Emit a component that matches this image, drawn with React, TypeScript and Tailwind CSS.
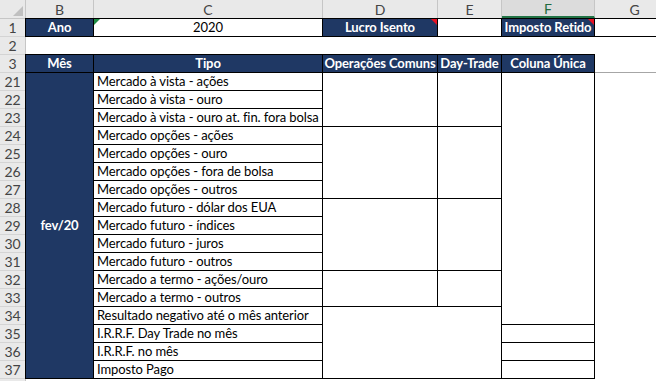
import React from 'react';

const font = "font-['Lato','Liberation_Sans',sans-serif]";

const colHeaders = [
  { label: 'B', w: 'w-[68px]', active: false },
  { label: 'C', w: 'w-[229px]', active: false },
  { label: 'D', w: 'w-[115px]', active: false },
  { label: 'E', w: 'w-[64px]', active: false },
  { label: 'F', w: 'w-[93px]', active: true },
  { label: 'G', w: 'w-[80px]', active: false },
];

// row 38 is only a couple of pixels tall in view, its number isn't visible
const rowNums = ['1', '2', '3', '21', '22', '23', '24', '25', '26', '27', '28', '29', '30', '31', '32', '33', '34', '35', '36', '37', ''];

const tipos = [
  { label: 'Mercado à vista - ações', row: 'row-start-4' },
  { label: 'Mercado à vista - ouro', row: 'row-start-5' },
  { label: 'Mercado à vista - ouro at. fin. fora bolsa', row: 'row-start-6' },
  { label: 'Mercado opções - ações', row: 'row-start-7' },
  { label: 'Mercado opções - ouro', row: 'row-start-8' },
  { label: 'Mercado opções - fora de bolsa', row: 'row-start-9' },
  { label: 'Mercado opções - outros', row: 'row-start-10' },
  { label: 'Mercado futuro - dólar dos EUA', row: 'row-start-11' },
  { label: 'Mercado futuro - índices', row: 'row-start-12' },
  { label: 'Mercado futuro - juros', row: 'row-start-13' },
  { label: 'Mercado futuro - outros', row: 'row-start-14' },
  { label: 'Mercado a termo - ações/ouro', row: 'row-start-15' },
  { label: 'Mercado a termo - outros', row: 'row-start-16' },
  { label: 'Resultado negativo até o mês anterior', row: 'row-start-17' },
  { label: 'I.R.R.F. Day Trade no mês', row: 'row-start-18' },
  { label: 'I.R.R.F. no mês', row: 'row-start-19' },
  { label: 'Imposto Pago', row: 'row-start-20' },
];

// merged, empty blocks in D/E/F
const blocks = [
  'col-start-3 row-start-4 row-span-3',
  'col-start-4 row-start-4 row-span-3',
  'col-start-3 row-start-7 row-span-4',
  'col-start-4 row-start-7 row-span-4',
  'col-start-3 row-start-11 row-span-4',
  'col-start-4 row-start-11 row-span-4',
  'col-start-3 row-start-15 row-span-2',
  'col-start-4 row-start-15 row-span-2',
  'col-start-3 col-span-2 row-start-17 row-span-4',
  'col-start-5 row-start-4 row-span-14',
  'col-start-5 row-start-18',
  'col-start-5 row-start-19',
  'col-start-5 row-start-20',
];

const cell = '-mt-px -ml-px border border-black flex items-center whitespace-nowrap';
const blue = 'bg-[#1f3864] text-white font-bold justify-center';

const RedMark = () => (
  <span className="absolute top-0 right-0 w-0 h-0 border-t-[6px] border-t-[#e81123] border-l-[6px] border-l-transparent" />
);

export default function App() {
  return (
    <div className={`w-[656px] h-[381px] overflow-hidden bg-white text-[13px] tracking-[-0.1px] text-black ${font}`}>
      {/* column headers */}
      <div className="flex h-[19px] bg-[#e9e9e9] border-b border-[#c6c6c6] text-[#444] text-[14px]">
        <div className="relative w-[26px] shrink-0 border-r border-[#c6c6c6]">
          <span className="absolute bottom-[2px] right-[2px] w-0 h-0 border-b-[10px] border-b-[#c0c0c0] border-l-[10px] border-l-transparent" />
        </div>
        {colHeaders.map((c) => (
          <div
            key={c.label}
            className={
              c.active
                ? `${c.w} shrink-0 flex items-center justify-center border-r border-[#c6c6c6] bg-[#dcdcdc] text-[#1f6b40] border-b-2 border-b-[#217346]`
                : `${c.w} shrink-0 flex items-center justify-center border-r border-[#c6c6c6]`
            }
          >
            {c.label}
          </div>
        ))}
      </div>

      <div className="flex">
        {/* row numbers */}
        <div className="w-[26px] shrink-0 flex flex-col bg-[#e9e9e9] border-r border-[#c6c6c6] text-[#444] text-[14px]">
          {rowNums.map((n, i) => (
            <div key={i} className="h-[18px] shrink-0 flex items-center justify-center border-b border-[#d4d4d4]">
              {n}
            </div>
          ))}
        </div>

        {/* sheet */}
        <div className="grid grid-cols-[68px_229px_115px_64px_93px_80px] grid-rows-[repeat(21,18px)]">
          {/* row 1 */}
          <div className={`${cell} ${blue} col-start-1 row-start-1`}>Ano</div>
          <div className={`${cell} relative justify-center col-start-2 row-start-1`}>
            <span className="absolute top-0 left-0 w-0 h-0 border-t-[6px] border-t-[#1e8c45] border-r-[6px] border-r-transparent" />
            2020
          </div>
          <div className={`${cell} ${blue} relative col-start-3 row-start-1`}>
            Lucro Isento
            <RedMark />
          </div>
          <div className={`${cell} col-start-4 row-start-1`} />
          <div className={`${cell} ${blue} relative col-start-5 row-start-1`}>
            Imposto Retido
            <RedMark />
          </div>
          <div className={`${cell} col-start-6 row-start-1`} />

          {/* row 3 */}
          <div className={`${cell} ${blue} col-start-1 row-start-3`}>Mês</div>
          <div className={`${cell} ${blue} col-start-2 row-start-3`}>Tipo</div>
          <div className={`${cell} ${blue} col-start-3 row-start-3`}>Operações Comuns</div>
          <div className={`${cell} ${blue} col-start-4 row-start-3`}>Day-Trade</div>
          <div className={`${cell} ${blue} col-start-5 row-start-3`}>Coluna Única</div>
          <div className="col-start-6 row-start-3 border-b border-[#a6a6a6]" />

          {/* month */}
          <div className={`${cell} ${blue} col-start-1 row-start-4 row-span-17`}>fev/20</div>

          {tipos.map((t) => (
            <div key={t.label} className={`${cell} col-start-2 ${t.row} pl-[3px]`}>
              {t.label}
            </div>
          ))}

          {blocks.map((b) => (
            <div key={b} className={`${cell} ${b}`} />
          ))}
        </div>
      </div>
    </div>
  );
}
